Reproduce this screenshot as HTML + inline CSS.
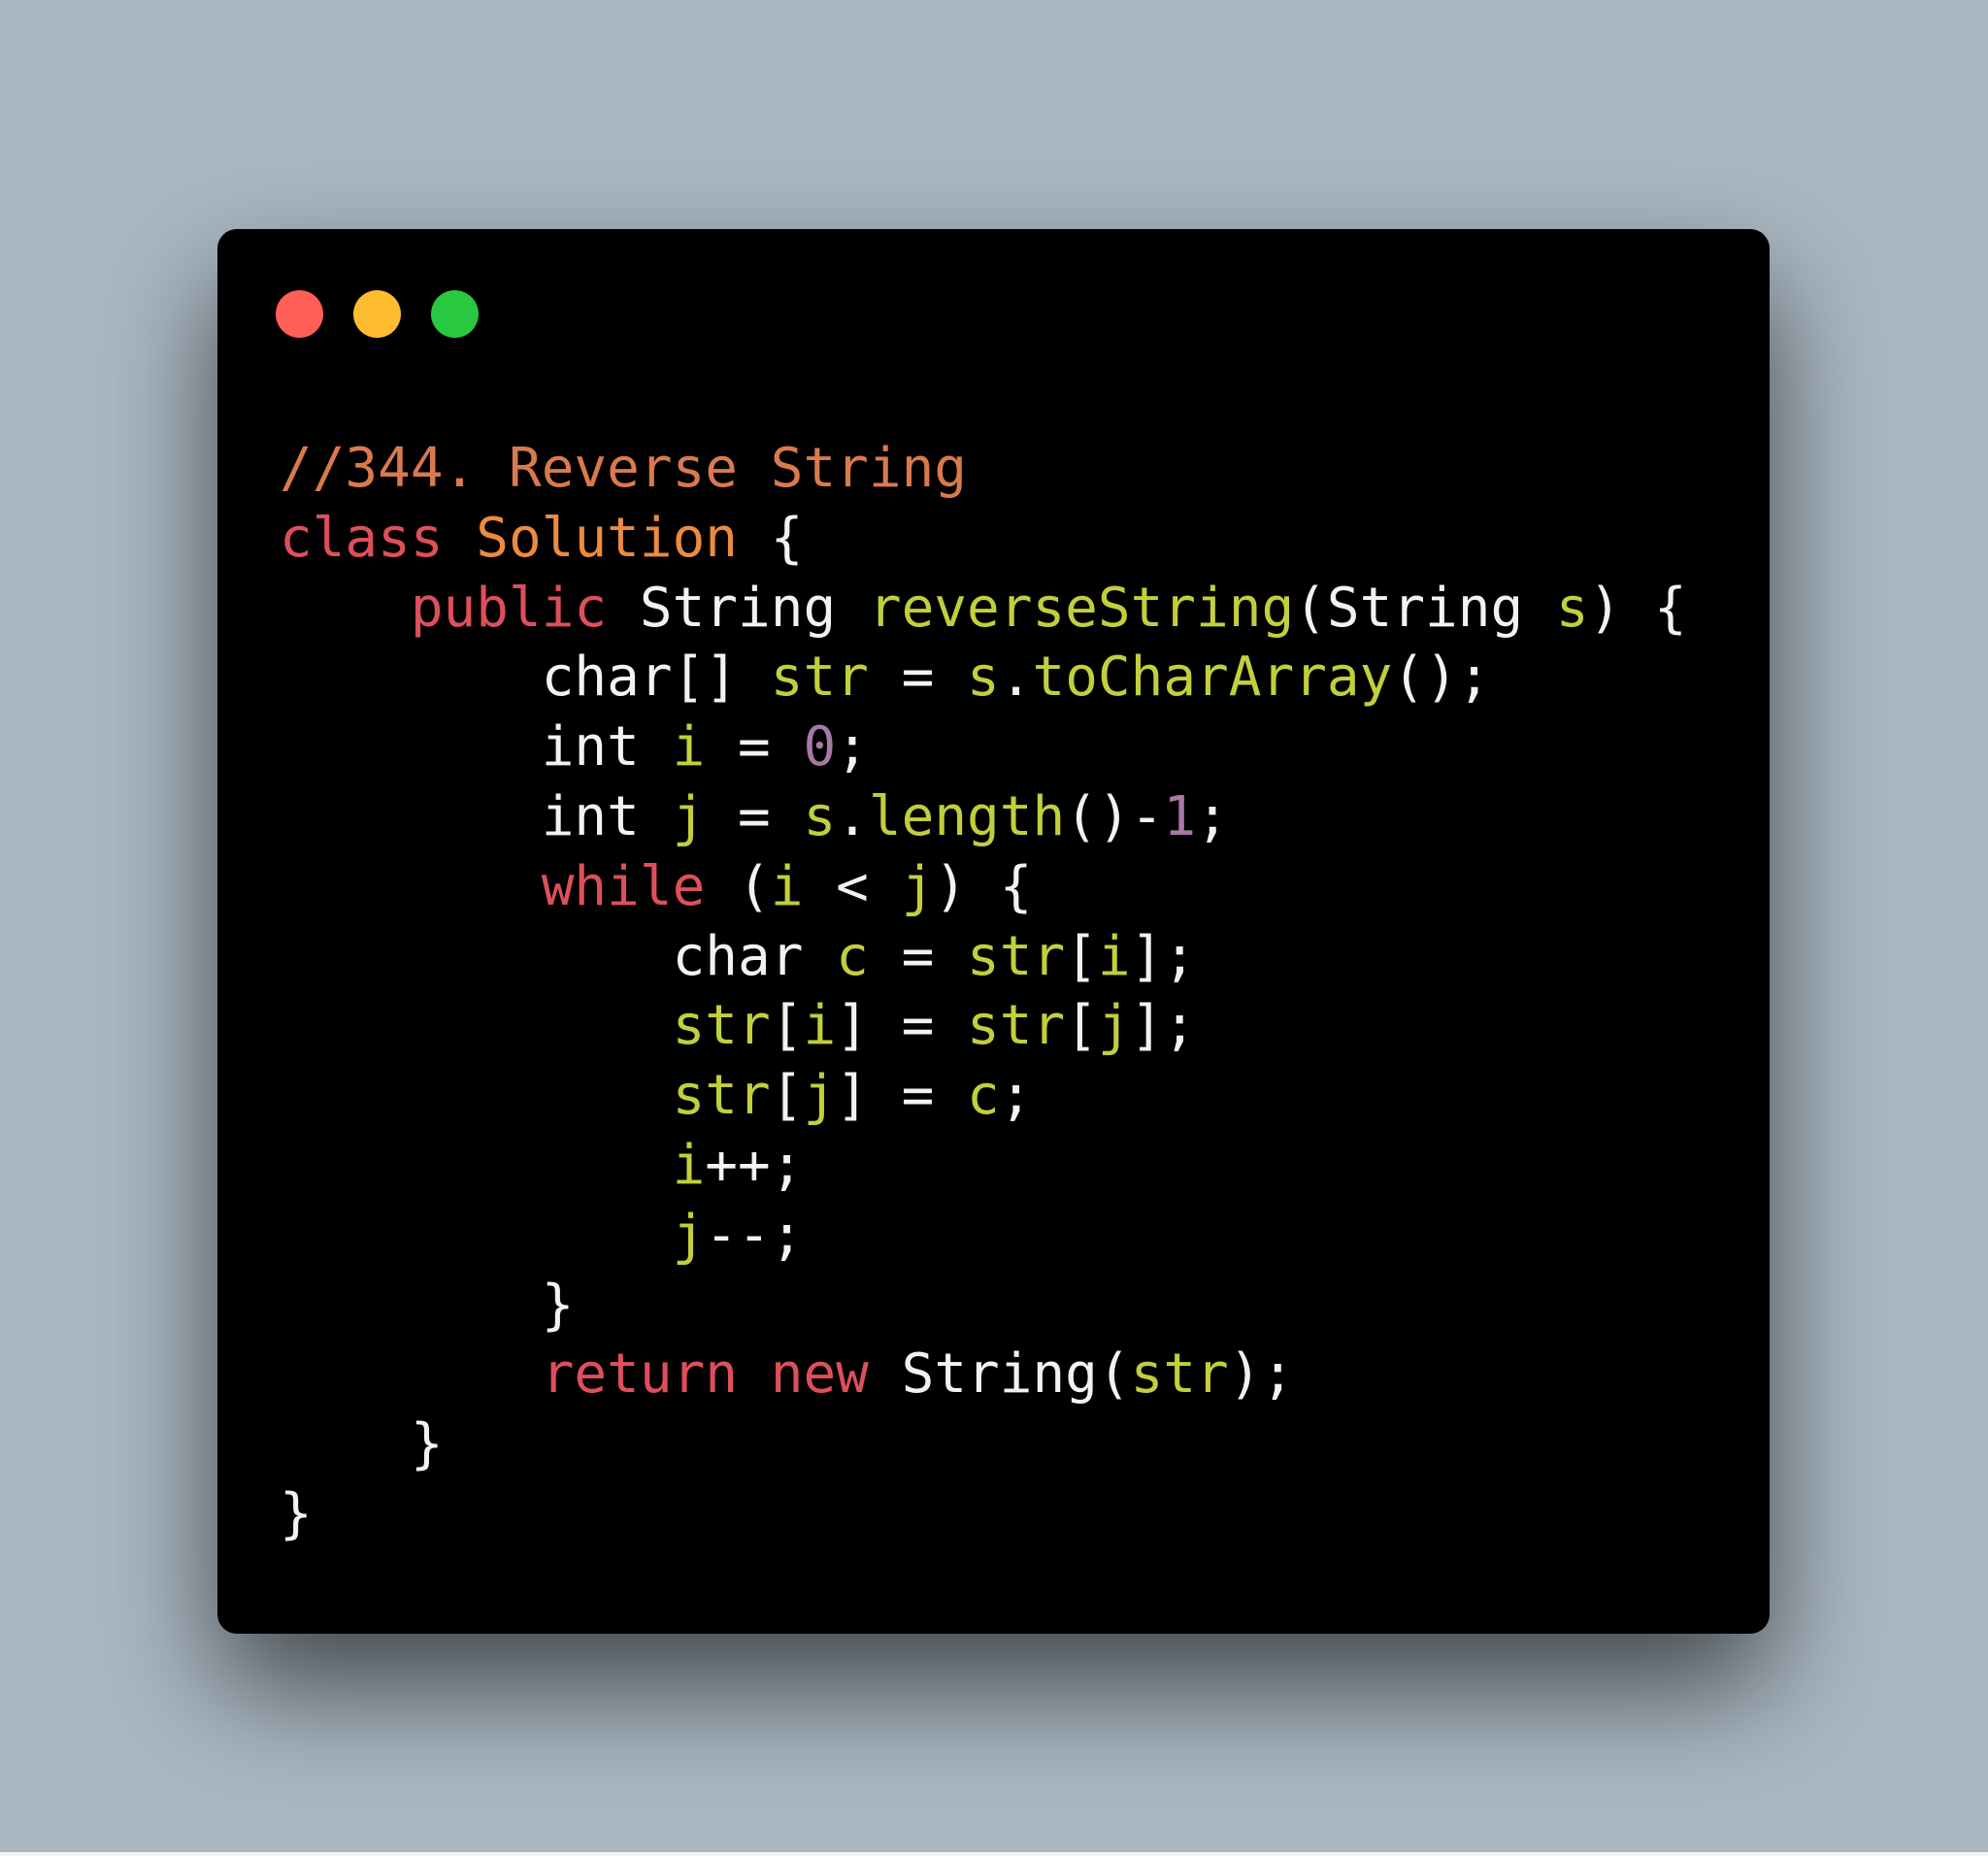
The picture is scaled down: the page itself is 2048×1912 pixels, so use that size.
<!DOCTYPE html>
<html><head><meta charset="utf-8"><style>
html,body{margin:0;padding:0}
body{width:2048px;height:1912px;background:#abb8c3;position:relative;overflow:hidden}
.strip{position:absolute;left:0;right:0;bottom:0;height:4px;background:#f4f4f4}
.win{position:absolute;left:224px;top:236px;width:1599px;height:1447px;background:#000;border-radius:20px;box-shadow:0 55px 120px rgba(0,0,0,0.62)}
.dot{position:absolute;top:299px;width:49px;height:49px;border-radius:50%}
pre{position:absolute;left:288px;top:447px;margin:0;font-family:"DejaVu Sans Mono","Liberation Mono",monospace;font-size:56px;line-height:71.8px;color:#f2f2f2}
.cm{color:#d97a4e}.kw{color:#de4f5c}.cl{color:#ec8b3f}.g{color:#c2cf3c}.n{color:#a878a6}
</style></head><body>
<div class="win"></div>
<div class="dot" style="left:284px;background:#ff5f57"></div>
<div class="dot" style="left:364px;background:#febc2e"></div>
<div class="dot" style="left:444px;background:#28c840"></div>
<pre><span class="cm">//344. Reverse String</span>
<span class="kw">class</span> <span class="cl">Solution</span> {
    <span class="kw">public</span> String <span class="g">reverseString</span>(String <span class="g">s</span>) {
        char[] <span class="g">str</span> = <span class="g">s</span>.<span class="g">toCharArray</span>();
        int <span class="g">i</span> = <span class="n">0</span>;
        int <span class="g">j</span> = <span class="g">s</span>.<span class="g">length</span>()-<span class="n">1</span>;
        <span class="kw">while</span> (<span class="g">i</span> &lt; <span class="g">j</span>) {
            char <span class="g">c</span> = <span class="g">str</span>[<span class="g">i</span>];
            <span class="g">str</span>[<span class="g">i</span>] = <span class="g">str</span>[<span class="g">j</span>];
            <span class="g">str</span>[<span class="g">j</span>] = <span class="g">c</span>;
            <span class="g">i</span>++;
            <span class="g">j</span>--;
        }
        <span class="kw">return</span> <span class="kw">new</span> String(<span class="g">str</span>);
    }
}</pre>
<div class="strip"></div>
</body></html>
